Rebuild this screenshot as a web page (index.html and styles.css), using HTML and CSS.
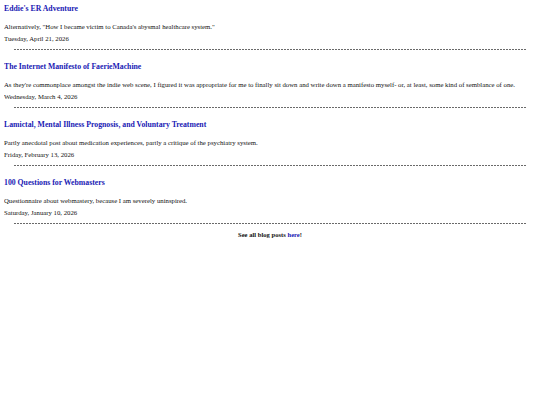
FILE: index.html
```html
<!DOCTYPE html>
<html>
<head>
<meta charset="utf-8">
<link rel="stylesheet" href="styles.css">
</head>
<body>
<div class="posts">
  <div class="post">
    <a class="title" href="#">Eddie's ER Adventure</a>
    <p class="desc">Alternatively, "How I became victim to Canada's abysmal healthcare system."</p>
    <p class="date">Tuesday, April 21, 2026</p>
    <div class="rule"></div>
  </div>
  <div class="post">
    <a class="title" href="#">The Internet Manifesto of FaerieMachine</a>
    <p class="desc">As they're commonplace amongst the indie web scene, I figured it was appropriate for me to finally sit down and write down a manifesto myself- or, at least, some kind of semblance of one.</p>
    <p class="date">Wednesday, March 4, 2026</p>
    <div class="rule"></div>
  </div>
  <div class="post">
    <a class="title" href="#">Lamictal, Mental Illness Prognosis, and Voluntary Treatment</a>
    <p class="desc">Partly anecdotal post about medication experiences, partly a critique of the psychiatry system.</p>
    <p class="date">Friday, February 13, 2026</p>
    <div class="rule"></div>
  </div>
  <div class="post">
    <a class="title" href="#">100 Questions for Webmasters</a>
    <p class="desc">Questionnaire about webmastery, because I am severely uninspired.</p>
    <p class="date">Saturday, January 10, 2026</p>
    <div class="rule"></div>
  </div>
</div>
<p class="all">See all blog posts <a href="#">here</a>!</p>
</body>
</html>
```
FILE: styles.css
```css
html, body {
  background: #ffffff;
}
body {
  margin: 4px;
  font-family: "Liberation Serif", "Times New Roman", serif;
  color: #111111;
}
.post {
  display: flex;
  flex-direction: column;
}
.title {
  display: block;
  font-size: 7.75px;
  line-height: 9px;
  font-weight: bold;
  color: #1a1ab4;
  text-decoration: none;
  margin-bottom: 8px;
}
.desc, .date {
  margin: 0;
  font-size: 6.75px;
  line-height: 12px;
}
.rule {
  height: 1px;
  margin: 4px 10px 12px 10px;
  background-image: repeating-linear-gradient(to right, #6a6a6a 0 2px, transparent 2px 3px);
}
.post:last-child .rule {
  margin-bottom: 5px;
}
.all {
  margin: 0;
  text-align: center;
  font-size: 6.6px;
  line-height: 12px;
  font-weight: bold;
}
.all a {
  color: #1a1ab4;
  text-decoration: none;
}
```
